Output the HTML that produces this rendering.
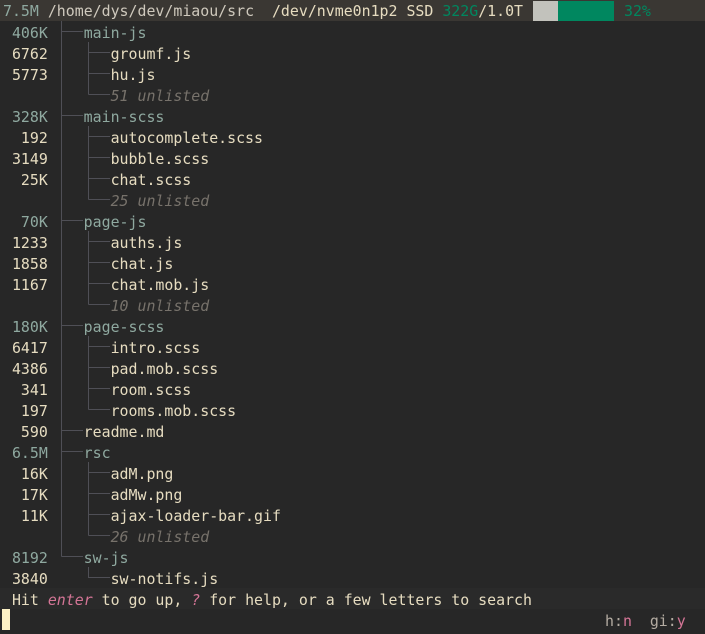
<!DOCTYPE html>
<html><head><meta charset="utf-8">
<style>
html,body{margin:0;padding:0;background:#272727;width:705px;height:634px;overflow:hidden}
body{position:relative;font-family:"DejaVu Sans Mono","Liberation Mono",monospace;font-size:14.9px;color:#e6dcc0}
.r{position:absolute;left:3px;height:21px;line-height:21px;white-space:pre;margin-top:2px}
.hdr{position:absolute;left:0;top:0;width:705px;height:21px;background:#3a3733}
.d{color:#8fa9a0}
.f{color:#e6dcc0}
.u{color:#77726b;font-style:italic}
.g{color:#00875f}
.p{color:#d47596}
.s{position:absolute;height:21px;line-height:21px;white-space:pre;margin-top:2px}
svg{position:absolute;left:0;top:0}
</style></head><body>
<div class="hdr"></div>
<div class="r" style="top:0;color:#cfc9bd;margin-top:1px"><span class="d">7.5M</span> /home/dys/dev/miaou/src  <span style="color:#e6dcc0">/dev/nvme0n1p2 SSD </span><span class="g">322G</span><span style="color:#e6dcc0">/1.0T</span></div>
<div style="position:absolute;top:1px;left:533px;width:25px;height:20px;background:#c2c2bc"></div>
<div style="position:absolute;top:1px;left:558px;width:56px;height:20px;background:#00875f"></div>
<div class="s g" style="top:0;left:624px;margin-top:1px">32%</div>

<svg width="705" height="634" stroke="#4f4f56" stroke-width="1" fill="none">
<path d="M61.5 21V556.5M61.5 31.5H83M61.5 115.5H83M61.5 220.5H83M61.5 325.5H83M61.5 430.5H83M61.5 451.5H83M61.5 556.5H83"/>
<path d="M88.5 42V94.5M88.5 52.5H110M88.5 73.5H110M88.5 94.5H110"/>
<path d="M88.5 126V199.5M88.5 136.5H110M88.5 157.5H110M88.5 178.5H110M88.5 199.5H110"/>
<path d="M88.5 231V304.5M88.5 241.5H110M88.5 262.5H110M88.5 283.5H110M88.5 304.5H110"/>
<path d="M88.5 336V409.5M88.5 346.5H110M88.5 367.5H110M88.5 388.5H110M88.5 409.5H110"/>
<path d="M88.5 462V535.5M88.5 472.5H110M88.5 493.5H110M88.5 514.5H110M88.5 535.5H110"/>
<path d="M88.5 567V577.5H110"/>
</svg>

<div class="r d" style="top:21px"> 406K    <span>main-js</span></div>
<div class="r" style="top:42px"> 6762       groumf.js</div>
<div class="r" style="top:63px"> 5773       hu.js</div>
<div class="r u" style="top:84px">            51 unlisted</div>
<div class="r d" style="top:105px"> 328K    main-scss</div>
<div class="r" style="top:126px">  192       autocomplete.scss</div>
<div class="r" style="top:147px"> 3149       bubble.scss</div>
<div class="r" style="top:168px">  25K       chat.scss</div>
<div class="r u" style="top:189px">            25 unlisted</div>
<div class="r d" style="top:210px">  70K    page-js</div>
<div class="r" style="top:231px"> 1233       auths.js</div>
<div class="r" style="top:252px"> 1858       chat.js</div>
<div class="r" style="top:273px"> 1167       chat.mob.js</div>
<div class="r u" style="top:294px">            10 unlisted</div>
<div class="r d" style="top:315px"> 180K    page-scss</div>
<div class="r" style="top:336px"> 6417       intro.scss</div>
<div class="r" style="top:357px"> 4386       pad.mob.scss</div>
<div class="r" style="top:378px">  341       room.scss</div>
<div class="r" style="top:399px">  197       rooms.mob.scss</div>
<div class="r" style="top:420px">  590    readme.md</div>
<div class="r d" style="top:441px"> 6.5M    rsc</div>
<div class="r" style="top:462px">  16K       adM.png</div>
<div class="r" style="top:483px">  17K       adMw.png</div>
<div class="r" style="top:504px">  11K       ajax-loader-bar.gif</div>
<div class="r u" style="top:525px">            26 unlisted</div>
<div class="r d" style="top:546px"> 8192    sw-js</div>
<div class="r" style="top:567px"> 3840       sw-notifs.js</div>

<div style="position:absolute;left:0;top:588px;width:705px;height:21px;background:#2a2a2a"></div>
<div class="r" style="top:588px"> Hit <span class="p" style="font-style:italic">enter</span> to go up, <span class="p" style="font-style:italic">?</span> for help, or a few letters to search</div>
<div style="position:absolute;left:2px;top:609px;width:8px;height:21px;background:#fbf0c4"></div>
<div class="s" style="top:609px;left:605px;color:#b4aca2">h:<span class="p">n</span>  gi:<span class="p">y</span></div>
</body></html>
